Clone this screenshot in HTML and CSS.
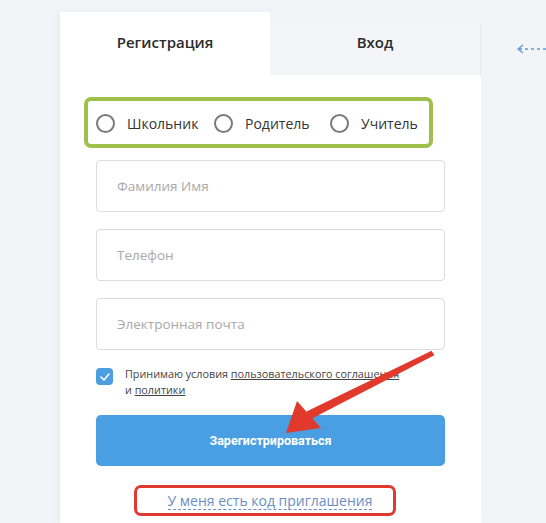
FILE: index.html
```html
<!DOCTYPE html>
<html lang="ru">
<head>
	<meta charset="UTF-8">
	<title>Регистрация</title>
	<link rel="stylesheet" href="styles.css">
</head>
<body>
	<div class="page">
		<div class="card">
			<div class="tabs">
				<div class="tab active">Регистрация</div>
				<div class="tab">Вход</div>
			</div>
			<div class="form">
				<div class="roles">
					<label class="role"><span class="radio"></span>Школьник</label>
					<label class="role"><span class="radio"></span>Родитель</label>
					<label class="role"><span class="radio"></span>Учитель</label>
				</div>
				<div class="field">Фамилия Имя</div>
				<div class="field">Телефон</div>
				<div class="field">Электронная почта</div>
				<div class="agree">
					<span class="check">
						<svg width="10" height="8" viewBox="0 0 10 8"><path d="M1 4 L4 7 L9 1" fill="none" stroke="#fff" stroke-width="1.6" stroke-linecap="round" stroke-linejoin="round"/></svg>
					</span>
					<p>Принимаю условия <a href="#">пользовательского соглашения</a><br>и <a href="#">политики</a></p>
				</div>
				<div class="btn">Зарегистрироваться</div>
				<div class="invite"><a href="#">У меня есть код приглашения</a></div>
			</div>
			<!-- стрелка-пометка поверх формы -->
			<svg class="pointer" width="160" height="95" viewBox="0 0 160 95">
				<path d="M151.6 5.8 L154.4 10.2 L31 74 L26.5 66.5 Z" fill="#e2392d"/>
				<path d="M6 88 L17 56 L41 83 Z" fill="#e2392d"/>
			</svg>
		</div>
		<div class="side">
			<svg width="30" height="12" viewBox="0 0 30 12"><path d="M6 2 L1 6 L6 10" fill="none" stroke="#5a9ad8" stroke-width="1.3"/><path d="M2 6 H30" stroke="#5a9ad8" stroke-width="1.3" stroke-dasharray="3 3"/></svg>
		</div>
	</div>
</body>
</html>
```

FILE: styles.css
```css
html,body{margin: 0;padding: 0;}
body{background: #f3f4f8;font-family: "Open Sans", "Noto Sans", sans-serif;color: #333;height: 523px;overflow: hidden;}
a{color: inherit;}
.page{display: flex;padding: 12px 0 0 60px;}
.card{width: 421px;flex: none;position: relative;box-shadow: -3px 0 6px rgba(0,0,0,0.03);}
.tabs{display: flex;align-items: flex-end;height: 63px;}
.tab{flex: 1;height: 51px;background: #f4f5f8;display: flex;align-items: center;justify-content: center;font-size: 15px;font-weight: 600;color: #2b2b2b;border-right: 1px solid #e9eaee;box-sizing: border-box;padding-bottom: 15px;}
.tab.active{height: 63px;background: #fff;border-right: none;padding-bottom: 3px;}
.form{background: #fff;padding: 22px 36px 0;height: 448px;box-sizing: border-box;}
.roles{display: flex;align-items: center;width: 349px;height: 51px;box-sizing: border-box;border: 4px solid #9fc04a;border-radius: 7px;margin-left: -12px;padding-left: 8px;padding-top: 2px;}
.role{display: flex;align-items: center;font-size: 14px;color: #333;width: 118px;}
.role:nth-child(2){width: 116px;}
.role:last-child{width: auto;}
.radio{width: 15px;height: 15px;border: 2px solid #7a7a7a;border-radius: 50%;margin-right: 12px;}
.field{height: 52px;box-sizing: border-box;border: 1px solid #dcdcdc;border-radius: 4px;margin-top: 12px;display: flex;align-items: center;padding-left: 20px;font-size: 13.5px;color: #a9a9a9;}
.field + .field{margin-top: 17px;}
.agree{display: flex;margin-top: 18px;}
.check{width: 17px;height: 17px;background: #4d9de1;border-radius: 4px;display: flex;align-items: center;justify-content: center;margin-right: 12px;flex: none;}
.agree p{margin: 0;font-size: 10.8px;line-height: 16px;color: #444;margin-top: -2px;}
.btn{margin-top: 17px;height: 51px;background: #4a9fe3;border-radius: 5px;color: #fff;font-family: Roboto, "Open Sans", sans-serif;font-size: 12.5px;font-weight: 700;display: flex;align-items: center;justify-content: center;}
.invite{width: 262px;height: 31px;box-sizing: border-box;border: 3.5px solid #e03a30;border-radius: 7px;margin: 19px 0 0 38px;display: flex;align-items: center;justify-content: center;padding-left: 10px;}
.invite a{font-size: 14px;color: #6a8ec7;text-decoration: none;border-bottom: 1px dashed #6a8ec7;line-height: 17px;}
.pointer{position: absolute;left: 220px;top: 333px;}
.side{flex: 1;padding: 26px 0 0 36px;}
```
